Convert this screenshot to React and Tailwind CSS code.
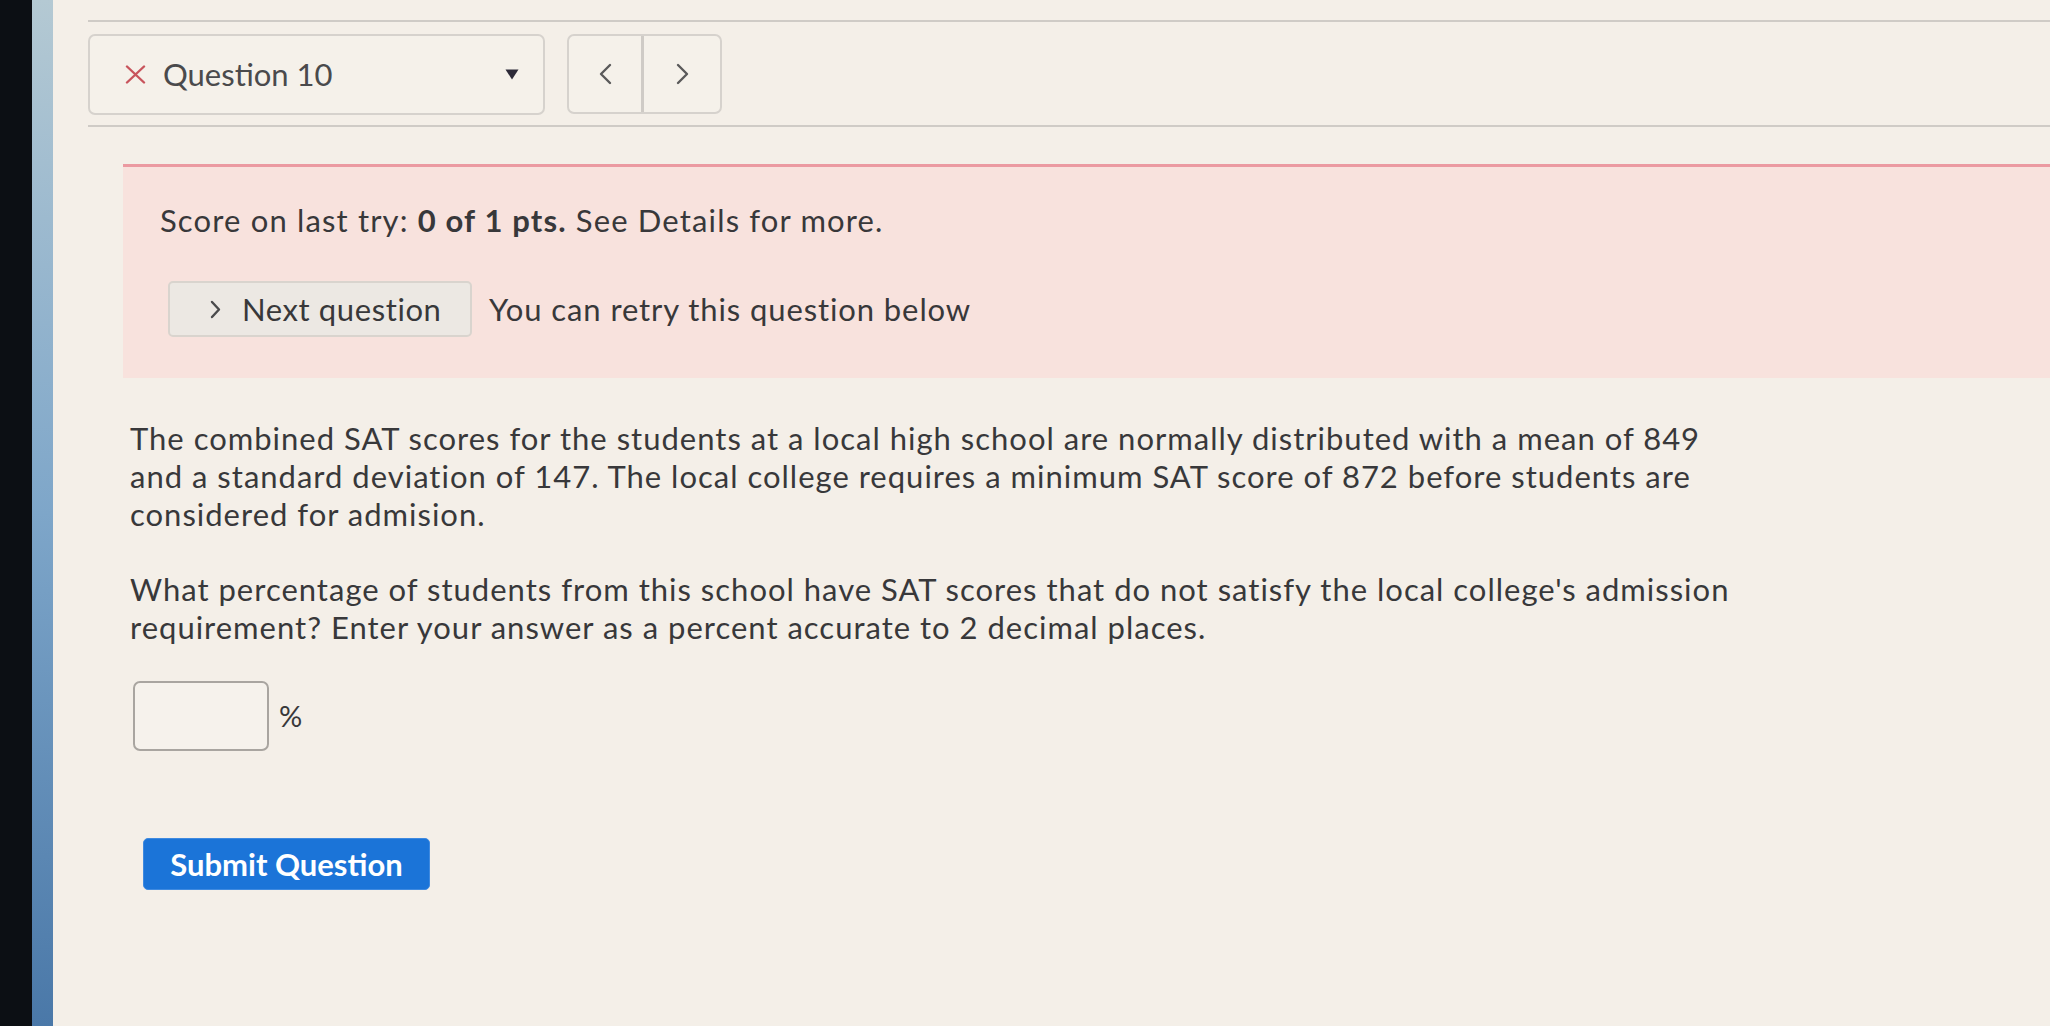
import React from "react";

function XIcon() {
  return (
    <svg width="21" height="19" viewBox="0 0 21 19" className="shrink-0">
      <path d="M2 1.5 L19 17.5 M19 1.5 L2 17.5" stroke="#c8545c" strokeWidth="2.4" strokeLinecap="round" />
    </svg>
  );
}

function Chevron({ dir = "right", w = 12, h = 20, color = "#5a5a5a", sw = 2.4 }) {
  const d = dir === "right" ? `M2 2 L${w - 2} ${h / 2} L2 ${h - 2}` : `M${w - 2} 2 L2 ${h / 2} L${w - 2} ${h - 2}`;
  return (
    <svg width={w} height={h} viewBox={`0 0 ${w} ${h}`} className="shrink-0">
      <path d={d} stroke={color} strokeWidth={sw} fill="none" strokeLinecap="round" strokeLinejoin="round" />
    </svg>
  );
}

export default function App() {
  return (
    <div
      className="flex w-[2050px] h-[1026px] overflow-hidden text-[#38383a]"
      style={{ fontFamily: "Lato, 'Open Sans', sans-serif" }}
    >
      <div className="w-[32px] shrink-0 bg-[#0c0f14]" />
      <div className="w-[21px] shrink-0 bg-gradient-to-b from-[#b4c9d3] via-[#7ea6c9] to-[#4a78a8]" />
      <div className="flex-1 flex flex-col bg-[#f4efe8]">
        <div className="pl-[35px] pt-[20px]">
          <div className="border-t-2 border-[#cfcbc6]" />
          <div className="flex items-start gap-[22px] mt-[12px]">
            <div className="w-[457px] h-[81px] border-2 border-[#d6d2cd] rounded-[7px] flex items-center pl-[35px] pr-[24px] bg-[#f5f1ea]">
              <XIcon />
              <span className="ml-[17px] text-[31px] text-[#4a4a4c] leading-none">Question 10</span>
              <div className="flex-1" />
              <svg width="14" height="11" viewBox="0 0 14 11">
                <path d="M0.5 0.5 L13.5 0.5 L7 10.5 Z" fill="#2d2a38" />
              </svg>
            </div>
            <div className="w-[155px] h-[80px] border-2 border-[#d6d2cd] rounded-[7px] flex bg-[#f5f1ea]">
              <div className="w-[75px] flex items-center justify-center border-r-[3px] border-[#cfcbc6]">
                <Chevron dir="left" w={13} h={22} />
              </div>
              <div className="flex-1 flex items-center justify-center">
                <Chevron dir="right" w={13} h={22} />
              </div>
            </div>
          </div>
          <div className="border-t-2 border-[#cfcbc6] mt-[10px]" />
        </div>

        <div className="ml-[70px] mt-[37px] h-[214px] border-t-[3px] border-[#eb9aa1] bg-[#f8e2dd] pl-[37px] pt-[34px]">
          <div className="text-[31px] leading-[38px] whitespace-nowrap tracking-[1.15px]">
            Score on last try: <b className="font-bold">0 of 1 pts.</b> See Details for more.
          </div>
          <div className="flex items-center mt-[42px]">
            <div className="ml-[8px] w-[304px] h-[56px] rounded-[5px] border-2 border-[#d9d4ce] bg-[#ece8e3] flex items-center pl-[40px]">
              <Chevron dir="right" w={11} h={19} color="#4a4a4c" sw={2.4} />
              <span className="ml-[21px] text-[31px] leading-none tracking-[0.6px]">Next question</span>
            </div>
            <span className="ml-[17px] text-[31px] leading-none whitespace-nowrap tracking-[0.9px]">You can retry this question below</span>
          </div>
        </div>

        <div className="ml-[77px] mt-[41px] text-[31px] leading-[38px] whitespace-nowrap tracking-[1px]">
          <p>
            The combined SAT scores for the students at a local high school are normally distributed with a mean of 849
            <br />
            and a standard deviation of 147. The local college requires a minimum SAT score of 872 before students are
            <br />
            considered for admision.
          </p>
          <p className="mt-[37px]">
            What percentage of students from this school have SAT scores that do not satisfy the local college's admission
            <br />
            requirement? Enter your answer as a percent accurate to 2 decimal places.
          </p>
          <div className="flex items-center mt-[35px] ml-[3px]">
            <div className="w-[136px] h-[70px] rounded-[7px] border-2 border-[#a9a5a0] bg-[#f6f2ec]" />
            <span className="ml-[10px] text-[29px] tracking-normal">%</span>
          </div>
          <button className="mt-[87px] ml-[13px] w-[287px] h-[52px] rounded-[5px] bg-[#1b74d8] border border-[#3f8ae0] text-white font-bold text-[31px] leading-none tracking-normal flex items-center justify-center">
            Submit Question
          </button>
        </div>
      </div>
    </div>
  );
}
